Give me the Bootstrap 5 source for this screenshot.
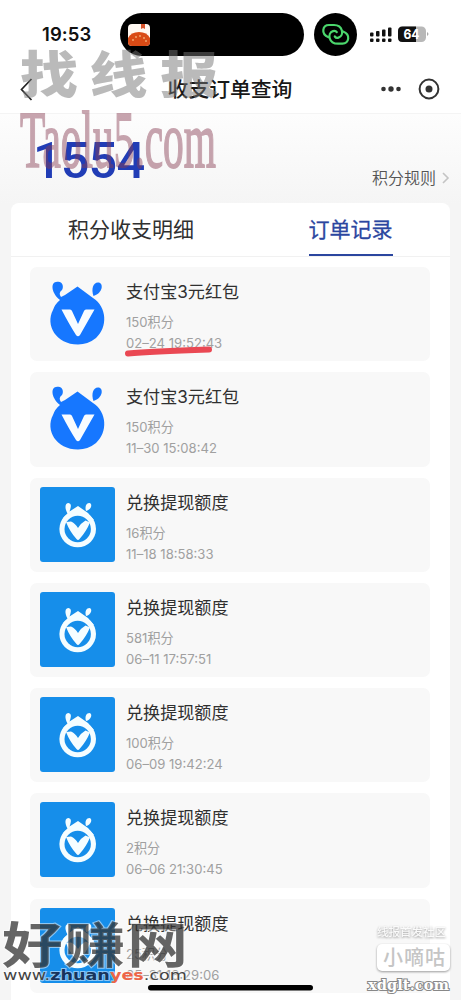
<!DOCTYPE html>
<html lang="zh-CN">
<head>
<meta charset="utf-8">
<meta name="viewport" content="width=device-width, initial-scale=1">
<title>收支订单查询</title>
<link href="https://cdn.jsdelivr.net/npm/bootstrap@5.3.0/dist/css/bootstrap.min.css" rel="stylesheet">
<style>
body{font-family:Inter,"Noto Sans CJK SC",sans-serif;background:#fff;color:#303030;height:1000px;overflow:hidden}
.screen{width:461px;height:1000px;overflow:hidden}
.status{height:56px;padding:13px 0 0 42px}
.clock{width:78px;font-size:18.5px;font-weight:600;line-height:43px;color:#111;letter-spacing:.1px}
.island{width:184px;height:43px;border-radius:22px;background:#000;padding:11px 8px}
.link-disc{width:43px;height:43px;margin-left:10px}
.titlebar{height:57px;padding:8px 20px 0}
.titlebar h1{font-size:20.8px;font-weight:500;color:#181818;line-height:30px;margin:2px 0 0 10px}
.back{width:63px;height:24px}
.tools{width:60px;height:24px;margin-left:14px}
.points-area{background:linear-gradient(#fdfdfd,#f5f5f5 90px);height:887px;border-top:1px solid #f4f4f4}
.points{height:89px}
.total{font:500 50.5px/60px Roboto,sans-serif;color:#213db6;letter-spacing:-.9px;margin:17px 0 0 33px}
.rules{font-size:16px;font-weight:350;color:#555;line-height:24px;height:24px;margin:52px 10px 0 0}
.panel{margin:0 11px;background:#fff;border-radius:8px 8px 0 0;height:797px}
.tabs{height:54px;border-bottom:1px solid #f1f1f1;font-size:21px;line-height:30px}
.tabs a{color:#303030;text-decoration:none;height:53px;padding-top:12px}
.tabs .active{color:#2b469f;border-bottom:2.5px solid #2b469f;-webkit-text-stroke:.3px #2b469f}
.orders{padding:10px 20px 0 19px;display:grid;row-gap:11px}
.order{height:94.3px;background:#f8f8f8;border-radius:7px;padding:9px 10px}
.pic{width:75px;height:75px;flex:none}
.name{font-size:17.1px;line-height:26px;color:#303030;margin-top:3px}
.meta{font-size:13.1px;line-height:21px;color:#a0a0a0;font-weight:400}
.overlay{left:0;top:0;pointer-events:none}
</style>
</head>
<body>
<main class="screen position-relative">
<div class="status d-flex">
  <div class="clock">19:53</div>
  <div class="island">
    <svg class="d-block" width="22" height="22" viewBox="0 0 22 22"><rect width="22" height="22" rx="4" fill="#fff8f2"/><path d="M13 0h4v5l-2-1-2 1z" fill="#d9542c"/><path d="M0 14Q3 8 11 8t11 6v4q0 4-4 4H4q-4 0-4-4z" fill="#d94b16"/><g fill="#ffe1a8"><circle cx="5" cy="16" r=".8"/><circle cx="8" cy="13" r=".8"/><circle cx="12" cy="12" r=".8"/><circle cx="16" cy="14" r=".8"/><circle cx="18" cy="17" r=".8"/></g></svg>
  </div>
  <svg class="link-disc" viewBox="0 0 43 43"><circle cx="21.500" cy="21.500" r="21.500"/><g fill="none" stroke="#4bd66c" stroke-width="2.200" stroke-linecap="round"><path d="M14.500 24.200C6.500 21 8.500 12 15 12H20C29 12 30.500 22.500 24.500 24.600C22.800 25.200 21.500 24.500 20.800 23.500"/><path d="M29 18.500C37 21.500 35 30.700 28.500 30.700H24C14.500 30.700 13 20.200 19 18.100C21 17.500 22.200 18.300 22.800 19.200"/></g></svg>
  <svg width="62" height="43" viewBox="0 0 62 43" style="margin-left:12px"><g fill="#111"><rect x="1" y="19.500" width="3.500" height="4" rx="1"/><rect x="7" y="18" width="3.500" height="5.500" rx="1"/><rect x="13" y="16.500" width="3.500" height="7" rx="1"/><rect x="19" y="14.500" width="3.500" height="9" rx="1"/><rect x="1" y="25.500" width="3.500" height="3.500" rx="1"/><rect x="7" y="25.500" width="3.500" height="3.500" rx="1"/><rect x="13" y="25.500" width="3.500" height="3.500" rx="1"/><rect x="19" y="25.500" width="3.500" height="3.500" rx="1"/></g><rect x="29" y="13.500" width="28" height="15.500" rx="4.500" fill="#b8b8b8"/><path d="M33.500 13.500H47V29H33.500Q29 29 29 24.500V18Q29 13.500 33.500 13.500" fill="#111"/><path d="M58 19q3 2 0 4z" fill="#aaa"/><text x="34.500" y="26" font-size="13" font-weight="700" fill="#fff" textLength="16" lengthAdjust="spacingAndGlyphs">64</text></svg>
</div>
<header class="titlebar d-flex align-items-center justify-content-between">
  <svg class="back" viewBox="0 0 63 24"><path d="M11.500 2L1.500 12.500 11.500 23" fill="none" stroke="#222" stroke-width="1.700"/></svg>
  <h1>收支订单查询</h1>
  <svg viewBox="0 0 60 24" class="tools"><g fill="#333"><circle cx="2.500" cy="12" r="2.300"/><circle cx="10" cy="12" r="2.700"/><circle cx="17.500" cy="12" r="2.300"/><circle cx="48" cy="12" r="3.500"/></g><circle cx="48" cy="12" r="9.400" fill="none" stroke="#333" stroke-width="2"/></svg>
</header>
<section class="points-area">
  <div class="points d-flex justify-content-between">
    <div class="total">1554</div>
    <div class="rules d-flex align-items-center">积分规则<svg width="10" height="14" viewBox="0 0 10 14" style="margin-left:5px"><path d="M2 2l5 5-5 5" fill="none" stroke="#c4c4c4" stroke-width="1.600"/></svg></div>
  </div>
  <div class="panel">
    <nav class="tabs d-flex"><div class="d-flex justify-content-center" style="width:240px"><a href="#">积分收支明细</a></div><div class="d-flex justify-content-center flex-fill"><a href="#" class="active">订单记录</a></div></nav>
    <div class="orders" id="orders"></div>
  </div>
</section>

<svg class="overlay position-absolute" width="461" height="1000" viewBox="0 0 461 1000">
  <g fill="#777" opacity=".5" font-family="Noto Sans CJK SC" font-weight="900" font-size="50"><text transform="translate(20 93) scale(1.160 1)"><tspan x="0">找</tspan><tspan x="60">线</tspan><tspan x="121">报</tspan></text></g>
  <text font-family="Liberation Serif" font-size="80" fill="#883d53" stroke="#883d53" stroke-width="1.800" opacity=".46" transform="translate(20 167) scale(.66 1)" textLength="297" lengthAdjust="spacingAndGlyphs">Taolu5.com</text>
  <path d="M128 353.500Q150 351.500 209 349.500" fill="none" stroke="#ea4853" stroke-width="6" stroke-linecap="round"/>
  <rect x="148" y="985" width="165" height="5.500" rx="2.750"/>
  <g stroke="#fff" stroke-opacity=".5" stroke-width="2" paint-order="stroke"><text transform="translate(2 963) scale(1.240 1)" font-family="Noto Sans CJK SC" font-weight="700" font-size="49" fill="#303030" fill-opacity=".74" textLength="150">好赚网</text>
  <text x="3" y="980" font-family="DejaVu Sans" font-size="14.500" fill="#444" textLength="184" lengthAdjust="spacingAndGlyphs">www.<tspan font-weight="700" fill="#17345c">zhuan</tspan><tspan font-weight="700" fill="#ed6548">yes</tspan>.com</text></g>
  <g style="filter:drop-shadow(0 1px 1px #999)"><text x="377" y="936" font-family="Noto Sans CJK SC" font-weight="500" font-size="11.500" fill="#fafafa" textLength="69">线报首发社区</text><rect x="377" y="944" width="73" height="27" rx="5" fill="#fff"/></g>
  <text x="383" y="965" font-family="Noto Sans CJK SC" font-weight="500" font-size="20" fill="#c5c5c5" textLength="62">小嘀咕</text>
  <text x="368" y="990" font-family="DejaVu Serif" font-weight="700" font-size="14" fill="#fff" stroke="#888" stroke-width="2" paint-order="stroke" textLength="81" lengthAdjust="spacingAndGlyphs">xdglt.com</text>
</svg>
</main>

<svg width="0" height="0" class="position-absolute"><defs>
<symbol id="redpacket" viewBox="0 0 75 75"><g fill="#1677ff"><path d="M20 24C12 18 10 7 16 6C23 4 24 11 22 14Q18 17 21 21L25 19 37.500 10.500 53 22C67 31 68 51 56 62Q48 68.500 38 68.500C16 68.500 5 49 13 34Q15 28 20 24"/><path d="M53.500 20C51 13 53 6.500 58 6.500C64 6.500 63 17 53.500 20"/></g><path d="M21.500 33.500H30Q31.500 33.500 32 35L38 48 44 35Q44.500 33.500 46 33.500H54.500L40 59Q38 61.500 36 59Q29 48 21.500 33.500" fill="#f8fcff"/></symbol>
<symbol id="quota" viewBox="0 0 75 75"><rect width="75" height="75" rx="3" fill="#168eea"/><g fill="#f5fdff"><circle cx="37.700" cy="42" r="18.300"/><path d="M23 31L27.500 26.500C24 20 25.500 16 28.500 16C32 17 31 20 29.500 24.500L38 19 48 26 54 33z"/><path d="M46 24C44.500 19 46.500 16 49.500 16C53 17 51 23 46 24"/></g><circle cx="37.700" cy="42" r="13.200" fill="#168eea"/><path d="M26 35L31 34.500Q35 36 38 41Q41 36 45.500 33.500L50 35.500Q46 45 39.500 52Q38 54 36.500 52Q30 45 26 35" fill="#f5fdff"/></symbol>
</defs></svg>
<script src="https://cdn.jsdelivr.net/npm/bootstrap@5.3.0/dist/js/bootstrap.bundle.min.js"></script>
<script>
const rows=[["redpacket","支付宝3元红包","150积分","02–24 19:52:43"],["redpacket","支付宝3元红包","150积分","11–30 15:08:42"],["quota","兑换提现额度","16积分","11–18 18:58:33"],["quota","兑换提现额度","581积分","06–11 17:57:51"],["quota","兑换提现额度","100积分","06–09 19:42:24"],["quota","兑换提现额度","2积分","06–06 21:30:45"],["quota","兑换提现额度","25积分","05–31 18:29:06"]];
document.getElementById("orders").innerHTML=rows.map(([i,n,p,t])=>`<article class="order d-flex"><svg class="pic"><use href="#${i}"/></svg><div style="margin-left:11px"><div class="name">${n}</div><div class="meta" style="margin-top:7px">${p}</div><div class="meta">${t}</div></div></article>`).join("");
</script>
</body>
</html>
